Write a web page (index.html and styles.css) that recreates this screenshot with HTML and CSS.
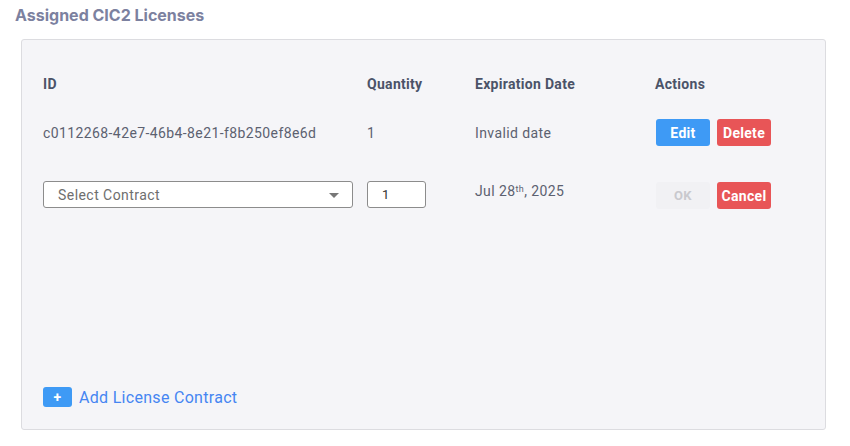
FILE: index.html
```html
<!DOCTYPE html>
<html lang="en">
<head>
    <meta charset="UTF-8">
    <meta name="viewport" content="width=device-width, initial-scale=1.0">
    <title>Assigned CIC2 Licenses</title>
    <link rel="stylesheet" href="styles.css">
</head>
<body>
    <h2 class="title">Assigned CIC2 Licenses</h2>
    <div class="panel">
        <div class="grid">
            <div class="head">ID</div>
            <div class="head">Quantity</div>
            <div class="head">Expiration Date</div>
            <div class="head">Actions</div>

            <div class="cell">c0112268-42e7-46b4-8e21-f8b250ef8e6d</div>
            <div class="cell">1</div>
            <div class="cell">Invalid date</div>
            <div class="cell actions">
                <button class="btn btn-blue">Edit</button>
                <button class="btn btn-red">Delete</button>
            </div>

            <div class="cell top">
                <div class="select">
                    <span>Select Contract</span>
                    <svg width="10" height="6" viewBox="0 0 10 6"><path d="M0 0 L10 0 L5 5 Z" fill="#777"/></svg>
                </div>
            </div>
            <div class="cell top"><input class="qty" type="text" value="1"></div>
            <div class="cell top"><span class="date">Jul 28<sup>th</sup>, 2025</span></div>
            <div class="cell top actions">
                <button class="btn btn-off">OK</button>
                <button class="btn btn-red">Cancel</button>
            </div>
        </div>
        <div class="add">
            <button class="btn btn-blue btn-plus">+</button>
            <span class="add-text">Add License Contract</span>
        </div>
    </div>
</body>
</html>
```

FILE: styles.css
```css
* {
    margin: 0;
    padding: 0;
    box-sizing: border-box;
    font-family: Roboto, "Liberation Sans", sans-serif;
}
body {
    background: white;
    padding: 5px 24px 0 15px;
    color: #5c6170;
}
.title {
    font-family: Inter, Roboto, sans-serif;
    font-size: 16px;
    font-weight: bold;
    line-height: 20px;
    color: #7c819f;
    margin-bottom: 14px;
}
.panel {
    margin-left: 6px;
    height: 391px;
    background: #f5f5f8;
    border: 1px solid #dcdce0;
    border-radius: 3px;
    padding: 34px 21px 22px 21px;
    display: flex;
    flex-direction: column;
}
.grid {
    display: grid;
    grid-template-columns: 324px 108px 180px 1fr;
    grid-template-rows: 20px 27px 28px;
    row-gap: 25px;
}
.grid .cell:nth-child(n+9) {
    margin-top: 10px;
}
.head {
    font-size: 14px;
    font-weight: bold;
    line-height: 20px;
    letter-spacing: 0.3px;
    color: #4b5368;
}
.cell {
    font-size: 14px;
    line-height: 20px;
    letter-spacing: 0.4px;
    color: #5c6170;
    display: flex;
    align-items: center;
}
.cell.top {
    align-items: flex-start;
}
.date sup {
    font-size: 9px;
    line-height: 0;
    vertical-align: 4px;
}
.actions {
    padding-left: 1px;
    gap: 7px;
}
.cell.top.actions {
    padding-top: 1px;
}
.btn {
    width: 54px;
    height: 27px;
    border: none;
    border-radius: 3px;
    font-size: 14px;
    font-weight: bold;
    letter-spacing: 0.3px;
    color: white;
    cursor: pointer;
}
.btn-blue {
    background: #3e9af5;
}
.btn-red {
    background: #e85557;
}
.btn-off {
    background: #f1f1f4;
    color: #c9c9ce;
    font-size: 13px;
}
.select {
    width: 310px;
    height: 27px;
    background: white;
    border: 1px solid #8c8c8c;
    border-radius: 3px;
    display: flex;
    align-items: center;
    justify-content: space-between;
    padding: 0 13px 0 14px;
    color: #6e6e6e;
    font-size: 14px;
    letter-spacing: 0.45px;
}
.select svg {
    margin-top: 2px;
}
.qty {
    width: 59px;
    height: 27px;
    border: 1px solid #8c8c8c;
    border-radius: 3px;
    padding-left: 14px;
    font-size: 13px;
    color: #333;
    background: white;
}
.add {
    margin-top: auto;
    display: flex;
    align-items: center;
    gap: 7px;
}
.btn-plus {
    width: 29px;
    height: 20px;
    font-size: 14px;
    line-height: 20px;
}
.add-text {
    font-size: 16px;
    letter-spacing: 0.3px;
    color: #4585f2;
}
```
